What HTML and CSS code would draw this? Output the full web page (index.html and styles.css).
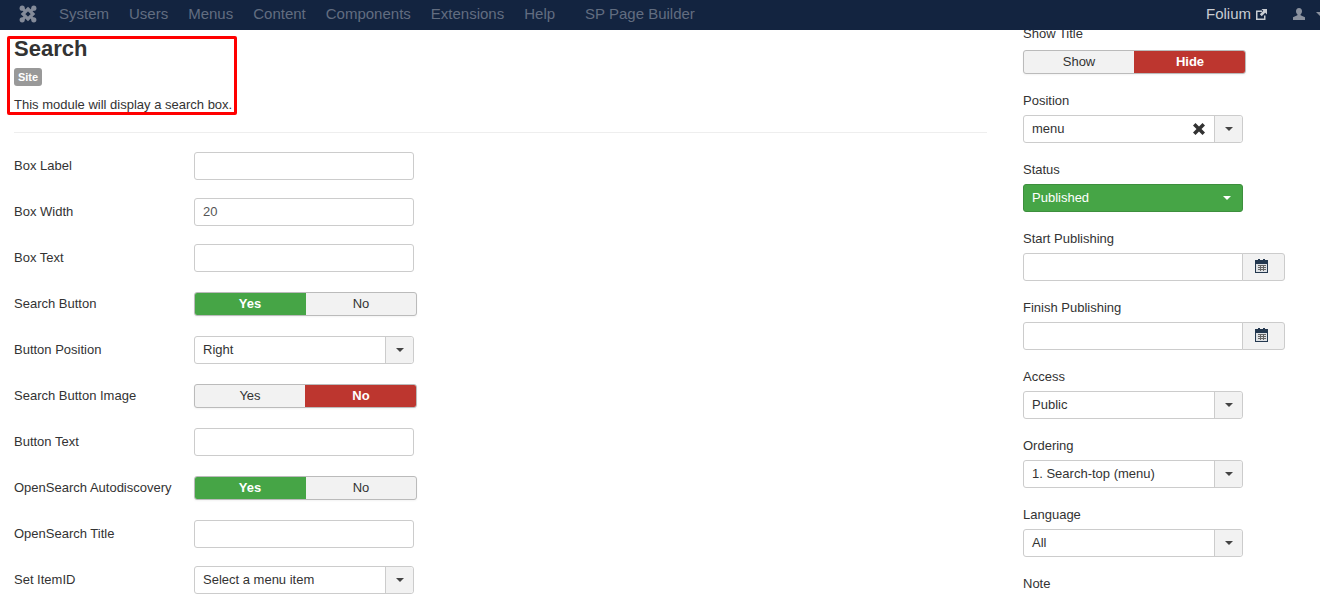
FILE: index.html
```html
<!DOCTYPE html>
<html lang="en">
<head>
    <meta charset="UTF-8">
    <meta name="viewport" content="width=device-width, initial-scale=1.0">
    <title>Modules: Search</title>
    <link rel="stylesheet" href="styles.css">
</head>
<body>
    <nav class="navbar">
        <svg class="logo" viewBox="0 0 18 18" width="18" height="18">
            <path d="M9 4 14 9 9 14 4 9z" fill="none" stroke="#848b99" stroke-width="3.200"/>
            <path d="M3 3l4 4M15 3l-4 4M3 15l4-4M15 15l-4-4" stroke="#848b99" stroke-width="2.600"/>
            <circle cx="3.200" cy="3.200" r="2.600" fill="#848b99"/>
            <circle cx="14.800" cy="3.200" r="2.600" fill="#848b99"/>
            <circle cx="3.200" cy="14.800" r="2.600" fill="#848b99"/>
            <circle cx="14.800" cy="14.800" r="2.600" fill="#848b99"/>
        </svg>
        <ul class="menu">
            <li>System</li>
            <li>Users</li>
            <li>Menus</li>
            <li>Content</li>
            <li>Components</li>
            <li>Extensions</li>
            <li>Help</li>
            <li class="menu-sp">SP Page Builder</li>
        </ul>
        <div class="nav-right">
            <span class="site-name">Folium</span>
            <svg class="ext-icon" viewBox="0 0 11 11" width="11" height="11">
                <path d="M0 1.500h6v1.500H1.500v6.500h6.500V6.500h1.500V11H0z" fill="#c8ccd2"/>
                <path d="M5.500 0H11v5.500L9.200 3.700 5.700 7.200 3.800 5.300l3.500-3.500z" fill="#c8ccd2"/>
            </svg>
            <svg class="user-icon" viewBox="0 0 12 12" width="12" height="12">
                <path d="M6 0c2 0 3 1.400 3 3.200 0 1.300-.6 2.500-1.400 3v1L12 9.200V12H0V9.200l4.400-2v-1C3.600 5.700 3 4.500 3 3.200 3 1.400 4 0 6 0z" fill="#8a919e"/>
            </svg>
            <span class="user-caret"></span>
        </div>
    </nav>

    <div class="page">
        <main class="main-col">
            <h1>Search</h1>
            <span class="badge">Site</span>
            <p class="desc">This module will display a search box.</p>
            <hr>

            <div class="row"><label>Box Label</label><input type="text"></div>
            <div class="row"><label>Box Width</label><input type="text" value="20"></div>
            <div class="row"><label>Box Text</label><input type="text"></div>
            <div class="row">
                <label>Search Button</label>
                <div class="toggle"><span class="on-green">Yes</span><span>No</span></div>
            </div>
            <div class="row">
                <label>Button Position</label>
                <div class="select"><span class="select-val">Right</span><span class="select-btn"><i class="caret"></i></span></div>
            </div>
            <div class="row">
                <label>Search Button Image</label>
                <div class="toggle"><span>Yes</span><span class="on-red">No</span></div>
            </div>
            <div class="row"><label>Button Text</label><input type="text"></div>
            <div class="row">
                <label>OpenSearch Autodiscovery</label>
                <div class="toggle"><span class="on-green">Yes</span><span>No</span></div>
            </div>
            <div class="row"><label>OpenSearch Title</label><input type="text"></div>
            <div class="row">
                <label>Set ItemID</label>
                <div class="select"><span class="select-val">Select a menu item</span><span class="select-btn"><i class="caret"></i></span></div>
            </div>
        </main>

        <aside class="side-col">
            <div class="field field-first">
                <label>Show Title</label>
                <div class="toggle"><span>Show</span><span class="on-red">Hide</span></div>
            </div>
            <div class="field">
                <label>Position</label>
                <div class="select">
                    <span class="select-val">menu</span>
                    <svg class="clear-icon" viewBox="0 0 12 12" width="12" height="12">
                        <path d="M2.500 0 6 3.500 9.500 0 12 2.500 8.500 6 12 9.500 9.500 12 6 8.500 2.500 12 0 9.500 3.500 6 0 2.500z" fill="#333"/>
                    </svg>
                    <span class="select-btn"><i class="caret"></i></span>
                </div>
            </div>
            <div class="field">
                <label>Status</label>
                <div class="select select-green"><span class="select-val">Published</span><i class="caret"></i></div>
            </div>
            <div class="field">
                <label>Start Publishing</label>
                <div class="date">
                    <input type="text">
                    <span class="date-btn">
                        <svg viewBox="0 0 13 14" width="13" height="14">
                            <path d="M0 1h3V0h2v1h3V0h2v1h3v13H0z" fill="#24384f"/>
                            <path d="M1 5h11v8H1z" fill="#dfe2e5"/>
                            <path d="M3 6h8v1H3zM3 8h8v1H3zM3 10h8v1H3zM5 6h1v6H5zM8 6h1v6H8z" fill="#666"/>
                        </svg>
                    </span>
                </div>
            </div>
            <div class="field">
                <label>Finish Publishing</label>
                <div class="date">
                    <input type="text">
                    <span class="date-btn">
                        <svg viewBox="0 0 13 14" width="13" height="14">
                            <path d="M0 1h3V0h2v1h3V0h2v1h3v13H0z" fill="#24384f"/>
                            <path d="M1 5h11v8H1z" fill="#dfe2e5"/>
                            <path d="M3 6h8v1H3zM3 8h8v1H3zM3 10h8v1H3zM5 6h1v6H5zM8 6h1v6H8z" fill="#666"/>
                        </svg>
                    </span>
                </div>
            </div>
            <div class="field">
                <label>Access</label>
                <div class="select"><span class="select-val">Public</span><span class="select-btn"><i class="caret"></i></span></div>
            </div>
            <div class="field">
                <label>Ordering</label>
                <div class="select"><span class="select-val">1. Search-top (menu)</span><span class="select-btn"><i class="caret"></i></span></div>
            </div>
            <div class="field">
                <label>Language</label>
                <div class="select"><span class="select-val">All</span><span class="select-btn"><i class="caret"></i></span></div>
            </div>
            <div class="field">
                <label>Note</label>
            </div>
        </aside>
    </div>

    <div class="highlight"></div>
</body>
</html>
```

FILE: styles.css
```css
html, body {
    height: 100%;
}
body {
    font-family: "Liberation Sans", Arial, sans-serif;
    font-size: 13px;
    line-height: 18px;
    color: #333;
    background-color: #fff;
    margin: 0;
    overflow: hidden;
}

/* top bar sits over the scrolled page */
.navbar {
    position: absolute;
    top: 0;
    left: 0;
    right: 0;
    height: 30px;
    background-color: #132440;
    display: flex;
    align-items: center;
    padding-left: 19px;
    padding-bottom: 2px;
    box-sizing: border-box;
    z-index: 2;
}
.logo {
    margin-right: 22px;
}
.menu {
    display: flex;
    gap: 20px;
    list-style: none;
    margin: 0;
    padding: 0;
    font-size: 15px;
    color: #626d80;
}
.menu-sp {
    margin-left: 10px;
}
.nav-right {
    margin-left: auto;
    display: flex;
    align-items: center;
    margin-right: -4px;
}
.site-name {
    font-size: 15px;
    color: #c8ccd2;
}
.ext-icon {
    margin-left: 5px;
}
.user-icon {
    margin-left: 26px;
}
.user-caret {
    margin-left: 11px;
    border-top: 4px solid #8a919e;
    border-left: 4px solid transparent;
    border-right: 4px solid transparent;
}

.page {
    display: flex;
}
.main-col {
    width: 973px;
    margin-left: 14px;
    padding-top: 37px;
}
.side-col {
    margin-left: 36px;
    padding-top: 25px;
}

h1 {
    font-size: 22px;
    line-height: 24px;
    font-weight: bold;
    margin: 0;
}
.badge {
    display: block;
    width: 28px;
    height: 18px;
    margin-top: 7px;
    background-color: #999;
    color: #fff;
    font-size: 11px;
    font-weight: bold;
    line-height: 18px;
    text-align: center;
    border-radius: 3px;
}
.desc {
    margin: 10px 0 0;
}
hr {
    border: none;
    border-top: 1px solid #eee;
    margin: 18px 0 19px;
}

.row {
    display: flex;
    align-items: center;
    height: 28px;
    margin-bottom: 18px;
}
.row label {
    width: 180px;
}
.field {
    margin-bottom: 18px;
}
.field label {
    display: block;
    margin-bottom: 5px;
}
.field-first label {
    margin-bottom: 7px;
}

input {
    box-sizing: border-box;
    width: 220px;
    height: 28px;
    padding: 0 8px 2px;
    border: 1px solid #ccc;
    border-radius: 3px;
    font: inherit;
    color: #555;
    background: #fff;
}

.toggle {
    display: flex;
    box-sizing: border-box;
    width: 223px;
    height: 24px;
    border: 1px solid #bbb;
    border-radius: 3px;
    background-color: #f2f2f2;
    overflow: hidden;
    box-shadow: 0 1px 2px rgba(0, 0, 0, 0.05);
}
.toggle span {
    flex: 1;
    line-height: 22px;
    text-align: center;
}
.toggle .on-green {
    flex: none;
    width: 112px;
    background-color: #46a546;
    color: #fff;
    font-weight: bold;
    margin: -1px 0 -1px -1px;
    line-height: 24px;
}
.toggle .on-red {
    flex: none;
    width: 112px;
    background-color: #bd362f;
    color: #fff;
    font-weight: bold;
    margin: -1px -1px -1px 0;
    line-height: 24px;
}

.select {
    display: flex;
    align-items: center;
    box-sizing: border-box;
    width: 220px;
    height: 28px;
    border: 1px solid #ccc;
    border-radius: 3px;
    background-color: #fff;
}
.select-val {
    flex: 1;
    padding-left: 8px;
}
.select-btn {
    display: flex;
    align-items: center;
    justify-content: center;
    box-sizing: border-box;
    width: 28px;
    height: 100%;
    border-left: 1px solid #ccc;
    background-color: #f2f2f2;
    border-radius: 0 3px 3px 0;
}
.caret {
    border-top: 4px solid #444;
    border-left: 4px solid transparent;
    border-right: 4px solid transparent;
}
.clear-icon {
    margin-right: 9px;
}
.select-green {
    background-color: #46a546;
    border-color: #3d8f3d;
    color: #fff;
}
.select-green .caret {
    border-top-color: #fff;
    margin-right: 11px;
}

.date {
    display: flex;
    width: 262px;
}
.date input {
    width: 220px;
    border-radius: 3px 0 0 3px;
}
.date-btn {
    display: flex;
    align-items: center;
    justify-content: center;
    box-sizing: border-box;
    width: 43px;
    height: 28px;
    margin-left: -1px;
    padding-right: 4px;
    padding-bottom: 2px;
    border: 1px solid #ccc;
    border-radius: 0 3px 3px 0;
    background-color: #f2f2f2;
}

/* red annotation box drawn over the header */
.highlight {
    position: absolute;
    left: 7px;
    top: 36px;
    width: 224px;
    height: 73px;
    border: 3px solid #f00;
    border-radius: 2px;
}
```
